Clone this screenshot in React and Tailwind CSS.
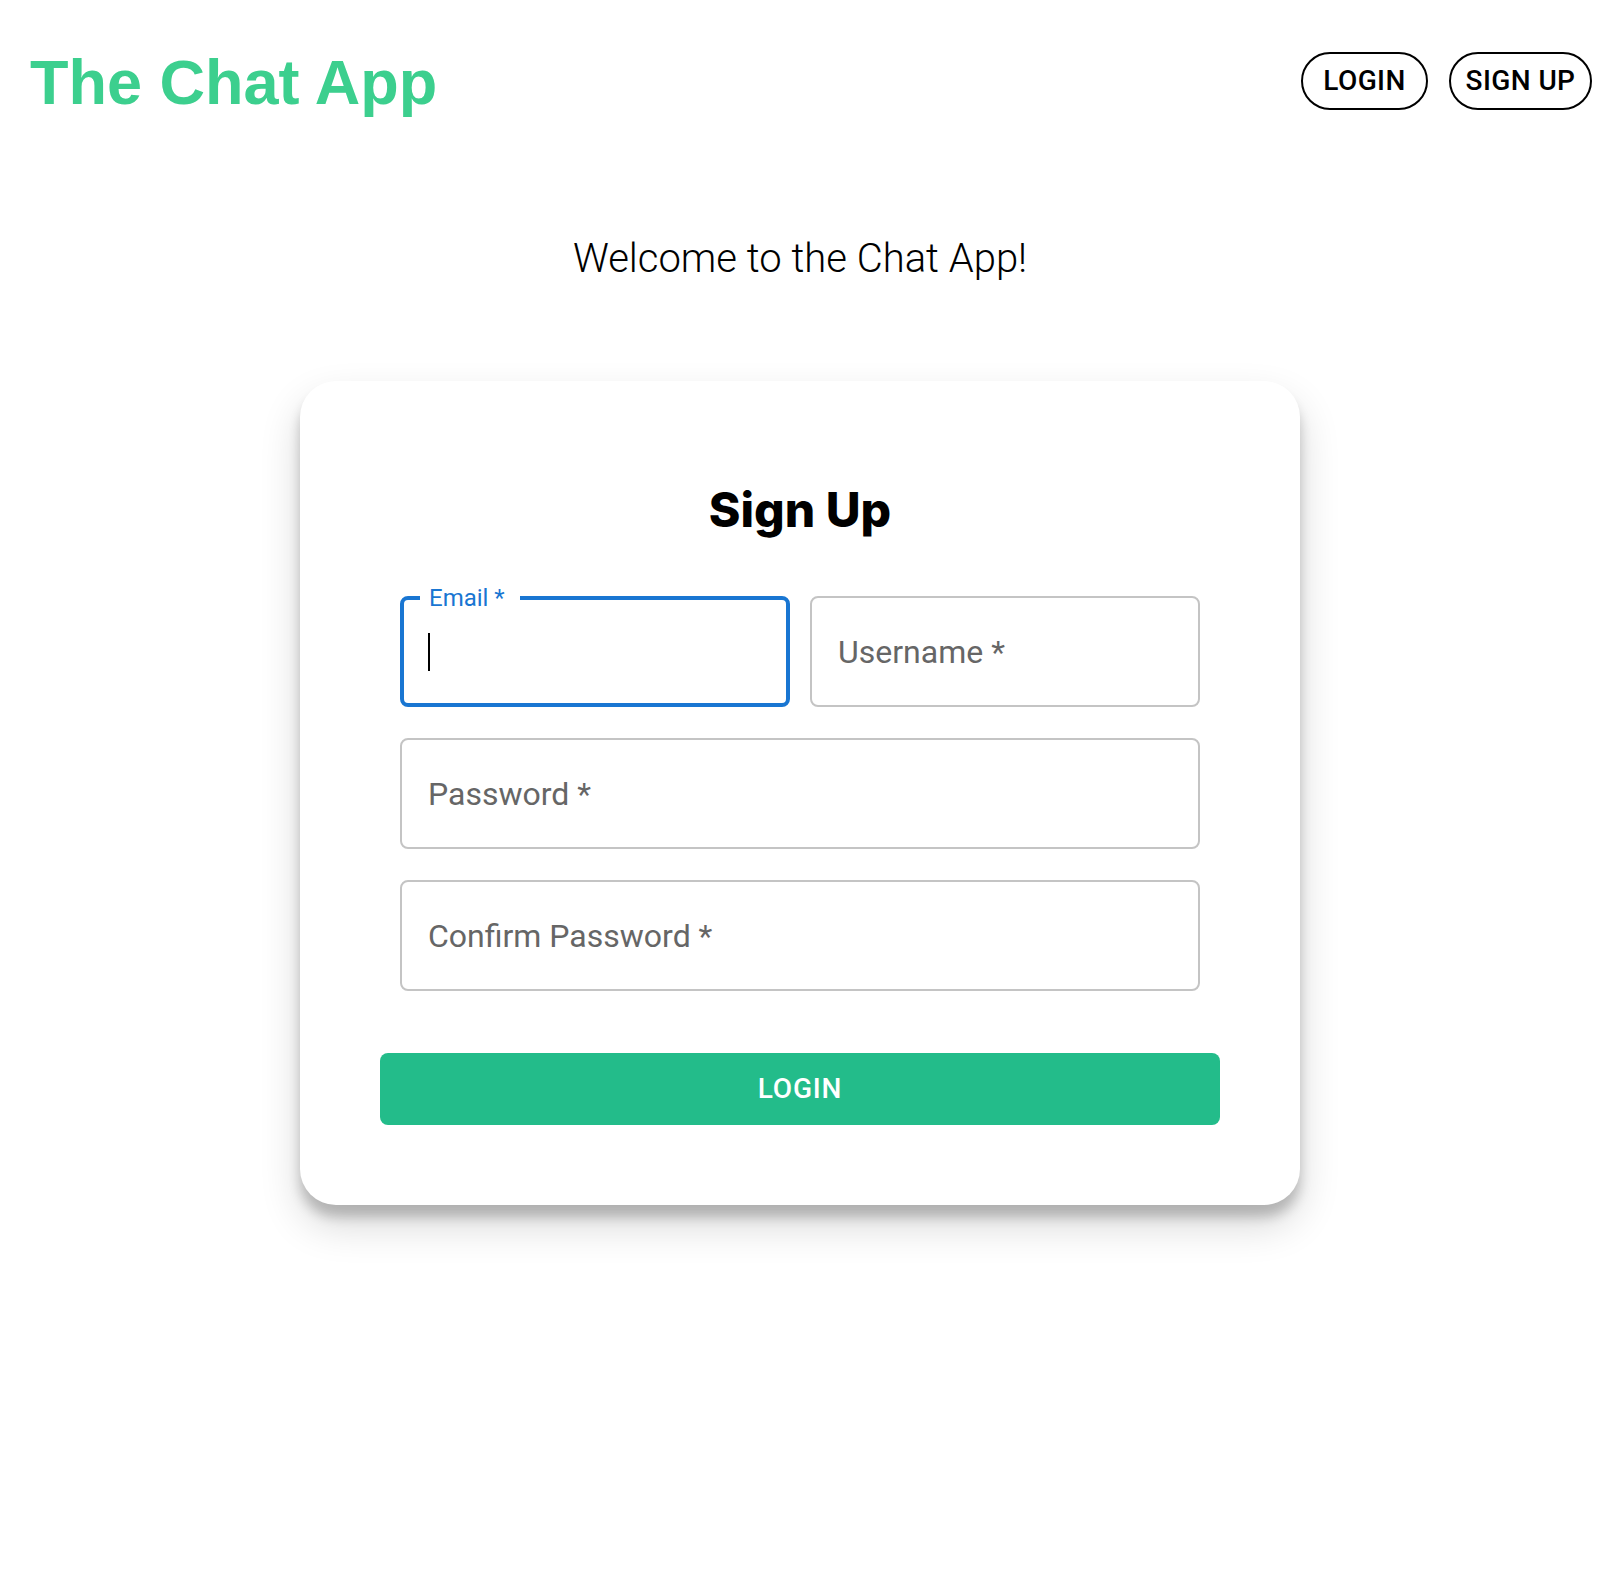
import React from 'react';

const roboto = { fontFamily: 'Roboto, "Liberation Sans", sans-serif' };

const HeaderButton = ({ label, width }) => (
  <button
    className={`h-[58px] ${width} rounded-full border-2 border-black bg-white text-[28px] font-medium tracking-[0.4px] text-black uppercase`}
    style={roboto}
  >
    {label}
  </button>
);

const Field = ({ label }) => (
  <div className="h-[111px] flex items-center rounded-[8px] border-2 border-[#c4c4c4] pl-[26px] bg-white">
    <span className="text-[32px] text-[#666666] leading-[40px]" style={roboto}>
      {label}
    </span>
  </div>
);

const EmailField = () => (
  <div className="relative h-[111px] flex items-center rounded-[8px] border-4 border-[#1976d2] pl-[24px] bg-white">
    <span
      className="absolute left-[16px] top-[-16px] bg-white pl-[9px] pr-[15px] text-[24px] leading-[28px] text-[#1976d2]"
      style={roboto}
    >
      Email *
    </span>
    <span className="block w-[2px] h-[38px] bg-black" />
  </div>
);

export default function App() {
  return (
    <div className="min-h-screen bg-white">
      <header className="flex items-center justify-between pl-[30px] pr-[12px] pt-[45px]">
        <h1
          className="text-[63px] leading-[74px] font-bold text-[#3ccf8e]"
          style={{ fontFamily: '"Liberation Sans", Arial, sans-serif' }}
        >
          The Chat App
        </h1>
        <div className="flex items-center gap-[21px] -mt-[3px]">
          <HeaderButton label="Login" width="w-[127px]" />
          <HeaderButton label="Sign Up" width="w-[143px]" />
        </div>
      </header>

      <main className="flex flex-col items-center pr-[4px]">
        <p
          className="mt-[116px] text-[40px] leading-[48px] font-light text-black"
          style={roboto}
        >
          Welcome to the Chat App!
        </p>

        <div className="mt-[98px] w-[1000px] rounded-[36px] bg-white px-[80px] pt-[100px] pb-[80px] shadow-[0_20px_40px_rgba(0,0,0,0.16),0_12px_12px_rgba(0,0,0,0.2)]">
          <h2
            className="text-center text-[48px] leading-[58px] font-extrabold text-black"
            style={{ fontFamily: 'Inter, "Liberation Sans", sans-serif' }}
          >
            Sign Up
          </h2>

          <div className="mt-[57px] px-[20px] flex flex-col gap-[31px]">
            <div className="grid grid-cols-2 gap-[20px]">
              <EmailField />
              <Field label="Username *" />
            </div>
            <Field label="Password *" />
            <Field label="Confirm Password *" />
          </div>

          <button
            className="mt-[62px] w-full h-[72px] rounded-[8px] bg-[#23bc8a] text-white text-[28px] font-medium tracking-[0.8px] uppercase"
            style={roboto}
          >
            Login
          </button>
        </div>
      </main>
    </div>
  );
}
